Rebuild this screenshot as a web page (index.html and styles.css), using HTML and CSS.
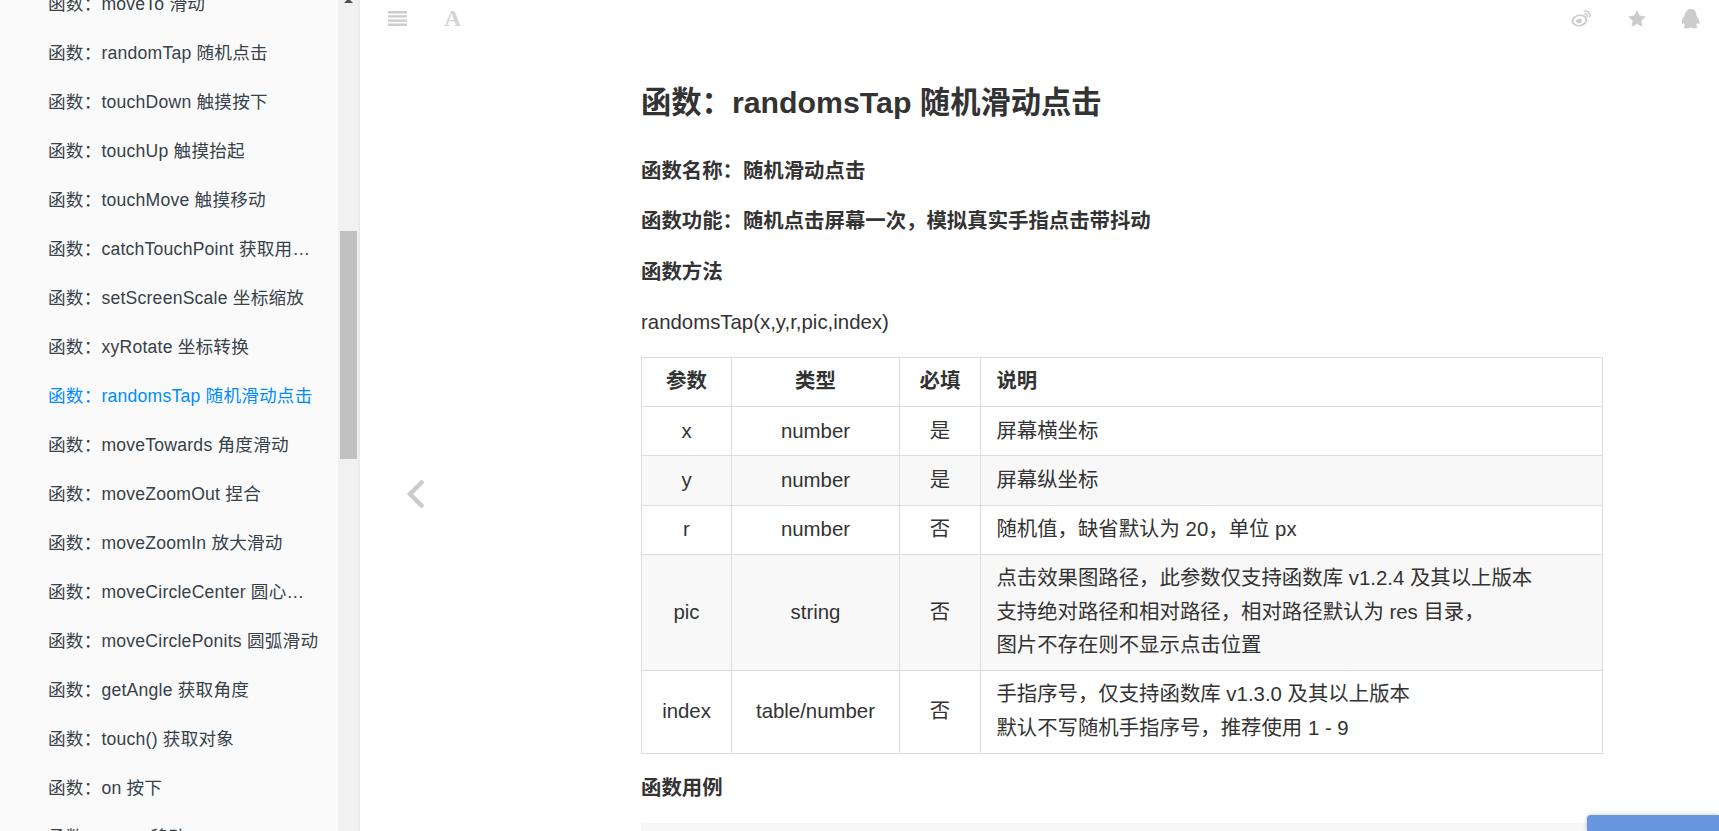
FILE: index.html
```html
<!DOCTYPE html>
<html lang="zh-CN">
<head>
    <meta charset="UTF-8"/>
    <title>函数&#xFF1A;randomsTap 随机滑动点击</title>
    <link rel="stylesheet" href="styles.css">
</head>
<body>

<!-- Sidebar -->
<div class="sidebar">
    <ul class="summary">
        <li>函数&#xFF1A;moveTo 滑动</li>
        <li>函数&#xFF1A;randomTap 随机点击</li>
        <li>函数&#xFF1A;touchDown 触摸按下</li>
        <li>函数&#xFF1A;touchUp 触摸抬起</li>
        <li>函数&#xFF1A;touchMove 触摸移动</li>
        <li>函数&#xFF1A;catchTouchPoint 获取用户点击坐标</li>
        <li>函数&#xFF1A;setScreenScale 坐标缩放</li>
        <li>函数&#xFF1A;xyRotate 坐标转换</li>
        <li class="active">函数&#xFF1A;randomsTap 随机滑动点击</li>
        <li>函数&#xFF1A;moveTowards 角度滑动</li>
        <li>函数&#xFF1A;moveZoomOut 捏合</li>
        <li>函数&#xFF1A;moveZoomIn 放大滑动</li>
        <li>函数&#xFF1A;moveCircleCenter 圆心滑动操作</li>
        <li>函数&#xFF1A;moveCirclePonits 圆弧滑动</li>
        <li>函数&#xFF1A;getAngle 获取角度</li>
        <li>函数&#xFF1A;touch() 获取对象</li>
        <li>函数&#xFF1A;on 按下</li>
        <li>函数&#xFF1A;move 移动</li>
    </ul>
    <div class="scrollbar">
        <div class="scroll-arrow"></div>
        <div class="scroll-thumb"></div>
    </div>
</div>

<!-- Page -->
<div class="body">
    <div class="book-header">
        <div class="header-left">
            <svg class="icon-menu" width="19" height="15" viewBox="0 0 19 15">
                <path d="M0 0h19v2.4H0zM0 4.2h19v2.4H0zM0 8.4h19v2.4H0zM0 12.6h19V15H0z"/>
            </svg>
            <span class="icon-font">A</span>
        </div>
        <div class="header-right">
            <svg width="21" height="17" viewBox="0 0 21 17">
                <g transform="rotate(-12 8.500 10.500)">
                    <path fill-rule="evenodd" d="M.5 10.500a8 6 0 1 0 16 0a8 6 0 1 0-16 0zM2.500 10.500a6 4.300 0 1 1 12 0a6 4.300 0 1 1-12 0z"/>
                    <ellipse cx="8" cy="10.800" rx="3" ry="2.300"/>
                </g>
                <path d="M13.500 1.200c3.200-.6 6 2 5.300 5.300M13.900 3.900c1.500-.3 2.900 1 2.500 2.600" fill="none" stroke="#ccc" stroke-width="1.500" stroke-linecap="round"/>
            </svg>
            <svg width="18" height="17" viewBox="0 0 18 17">
                <path d="M9 0l2.700 5.600 6.100.8-4.400 4.300 1.100 6.100L9 13.900 3.500 16.800l1.100-6.100L.2 6.400l6.100-.8z"/>
            </svg>
            <svg width="18" height="20" viewBox="0 0 18 20">
                <path d="M9 0c3.400 0 5.200 2.500 5.300 5.600 0 .7.200 1.200.500 1.700 1.200 1.700 2.700 4 2.700 6.300 0 1-.4 1.500-.8 1.500-.5 0-1-.7-1.400-1.400-.2 1.200-.8 2.200-1.600 2.900 1 .4 1.700.9 1.700 1.500 0 .8-1.500 1.300-3.400 1.300-1.300 0-2.500-.3-3.200-.8h-.6c-.7.500-1.900.8-3.200.8-1.900 0-3.400-.5-3.400-1.300 0-.6.700-1.100 1.700-1.500-.8-.7-1.400-1.700-1.600-2.900-.4.700-.9 1.400-1.400 1.400-.4 0-.8-.5-.8-1.500 0-2.300 1.500-4.600 2.700-6.300.3-.5.500-1 .5-1.700C3.800 2.500 5.600 0 9 0z"/>
            </svg>
        </div>
    </div>

    <div class="page-inner">
        <h1>函数&#xFF1A;randomsTap 随机滑动点击</h1>
        <p><strong>函数名称&#xFF1A;随机滑动点击</strong></p>
        <p><strong>函数功能&#xFF1A;随机点击屏幕一次&#xFF0C;模拟真实手指点击带抖动</strong></p>
        <p><strong>函数方法</strong></p>
        <p>randomsTap(x,y,r,pic,index)</p>

        <table>
            <thead>
            <tr>
                <th class="col-name">参数</th>
                <th class="col-type">类型</th>
                <th class="col-req">必填</th>
                <th class="col-desc">说明</th>
            </tr>
            </thead>
            <tbody>
            <tr>
                <td class="center">x</td>
                <td class="center">number</td>
                <td class="center">是</td>
                <td>屏幕横坐标</td>
            </tr>
            <tr>
                <td class="center">y</td>
                <td class="center">number</td>
                <td class="center">是</td>
                <td>屏幕纵坐标</td>
            </tr>
            <tr>
                <td class="center">r</td>
                <td class="center">number</td>
                <td class="center">否</td>
                <td>随机值&#xFF0C;缺省默认为 20&#xFF0C;单位 px</td>
            </tr>
            <tr>
                <td class="center">pic</td>
                <td class="center">string</td>
                <td class="center">否</td>
                <td>点击效果图路径&#xFF0C;此参数仅支持函数库 v1.2.4 及其以上版本<br>支持绝对路径和相对路径&#xFF0C;相对路径默认为 res 目录&#xFF0C;<br>图片不存在则不显示点击位置</td>
            </tr>
            <tr>
                <td class="center">index</td>
                <td class="center">table/number</td>
                <td class="center">否</td>
                <td>手指序号&#xFF0C;仅支持函数库 v1.3.0 及其以上版本<br>默认不写随机手指序号&#xFF0C;推荐使用 1 - 9</td>
            </tr>
            </tbody>
        </table>

        <p><strong>函数用例</strong></p>
        <pre class="code-block"></pre>
    </div>

    <!-- Prev arrow -->
    <svg class="nav-prev" width="20" height="30" viewBox="0 0 20 30">
        <path d="M17 2L4 15l13 13" fill="none" stroke="#ccc" stroke-width="4.500"/>
    </svg>
</div>

<!-- Floating button, cut off by the window -->
<div class="float-btn"></div>

</body>
</html>
```

FILE: styles.css
```css
html, body {
    height: 100%;
}

body {
    margin: 0;
    display: flex;
    overflow: hidden;
    font-family: "Liberation Sans", "Noto Sans CJK SC", sans-serif;
    color: #333;
    background-color: #fff;
}

/* Sidebar */
.sidebar {
    display: flex;
    flex: 0 0 358px;
    height: 100vh;
    overflow: hidden;
    background-color: #fafafa;
    border-right: 2px solid #ebebeb;
}

.summary {
    flex: 1;
    min-width: 0;
    margin: -20px 0 0;
    padding: 0;
    list-style: none;
}

.summary li {
    height: 49px;
    line-height: 49px;
    padding: 0 18px 0 48px;
    font-size: 17.6px;
    letter-spacing: 0.22px;
    color: #364149;
    white-space: nowrap;
    overflow: hidden;
    text-overflow: ellipsis;
}

.summary li.active {
    color: #008cff;
}

.scrollbar {
    flex: 0 0 20px;
    background-color: #f1f1f1;
    padding: 0 1px 0 2px;
    box-sizing: border-box;
}

.scroll-arrow {
    width: 3px;
    height: 0;
    margin: 0 auto;
    border-left: 3px solid transparent;
    border-right: 3px solid transparent;
    border-bottom: 3px solid #505050;
}

.scroll-thumb {
    height: 228px;
    margin-top: 228px;
    background-color: #c1c1c1;
}

/* Page */
.body {
    position: relative;
    flex: 1;
    min-width: 0;
}

.book-header {
    display: flex;
    justify-content: space-between;
    height: 37px;
    padding: 0 19px 18px 28px;
}

.book-header svg {
    fill: #ccc;
}

.header-left {
    display: flex;
    align-items: center;
    gap: 37px;
}

.header-right {
    display: flex;
    align-items: center;
    gap: 36px;
}

.icon-font {
    font-family: "Liberation Serif", serif;
    font-weight: bold;
    font-size: 24px;
    line-height: 37px;
    color: #d5d5d5;
}

.page-inner {
    padding: 21.5px 116px 0 281px;
    font-size: 20.4px;
    line-height: 33.66px;
}

h1 {
    margin: 0 0 26px;
    font-size: 30.3px;
    line-height: 52px;
}

p {
    margin: 0 0 17px;
}

table {
    width: 962px;
    margin: 0 0 18px;
    border-collapse: collapse;
    table-layout: fixed;
}

th, td {
    box-sizing: border-box;
    padding: 7.25px 15.4px;
    border: 1px solid #ddd;
}

th {
    text-align: center;
}

th.col-desc {
    text-align: left;
}

.col-name { width: 90px; }
.col-type { width: 168px; }
.col-req { width: 81px; }

td.center {
    text-align: center;
}

tbody tr:nth-child(even) {
    background-color: #f8f8f8;
}

.code-block {
    margin: 0;
    height: 200px;
    background-color: #f7f7f7;
}

.nav-prev {
    position: absolute;
    left: 46px;
    top: 479px;
}

.float-btn {
    position: fixed;
    right: 0;
    bottom: 0;
    width: 132px;
    height: 16px;
    background-color: #6897e0;
    border-radius: 4px 0 0 0;
    box-shadow: 0 0 4px rgba(0, 0, 0, 0.25);
}
```
